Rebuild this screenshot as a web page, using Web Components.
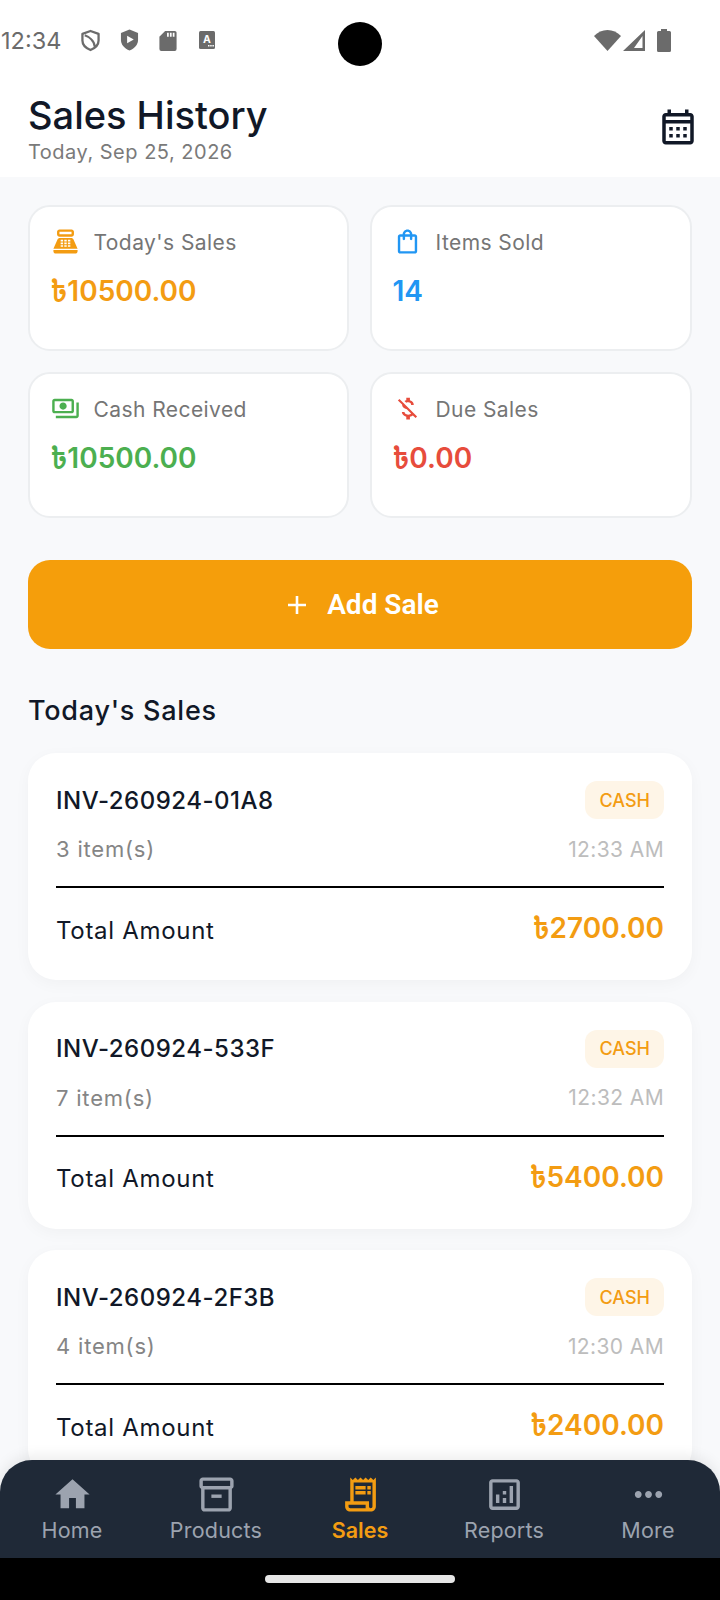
<!DOCTYPE html>
<html>
<head>
<meta charset="utf-8">
<style>
  html, body { margin: 0; padding: 0; }
  body { width: 720px; height: 1600px; overflow: hidden; background: #f8f9fb; font-family: Inter, "Noto Sans Bengali", "Noto Sans", sans-serif; }
  sales-screen { height: 1600px; }
</style>
</head>
<body>
<sales-screen>
  <status-bar slot="status"></status-bar>
  <page-header slot="header" title="Sales History" sub="Today, Sep 25, 2026"></page-header>
  <div slot="stats">
    <stat-grid>
      <stat-card label="Today's Sales" value="৳10500.00" color="#f39c12" icon="register"></stat-card>
      <stat-card label="Items Sold" value="14" color="#2196f3" icon="bag"></stat-card>
      <stat-card label="Cash Received" value="৳10500.00" color="#4caf50" icon="cash"></stat-card>
      <stat-card label="Due Sales" value="৳0.00" color="#e74c3c" icon="due"></stat-card>
    </stat-grid>
  </div>
  <add-button slot="action">Add Sale</add-button>
  <span slot="title">Today's Sales</span>
  <sale-card slot="list" inv="INV-260924-01A8" items="3 item(s)" time="12:33 AM" total="৳2700.00"></sale-card>
  <sale-card slot="list" inv="INV-260924-533F" items="7 item(s)" time="12:32 AM" total="৳5400.00"></sale-card>
  <sale-card slot="list" inv="INV-260924-2F3B" items="4 item(s)" time="12:30 AM" total="৳2400.00"></sale-card>
  <bottom-nav slot="nav"></bottom-nav>
</sales-screen>

<script>
// material icons, 24 grid
const ICONS = {
  register: '<path d="M17 2H7c-1.100 0-2 .9-2 2v2c0 1.100.9 2 2 2h10c1.100 0 2-.9 2-2V4c0-1.100-.9-2-2-2zm0 4H7V4h10v2zm3 16H4c-1.100 0-2-.9-2-2v-1h20v1c0 1.100-.9 2-2 2z"/><path fill-rule="evenodd" d="M18.530 10.190C18.210 9.470 17.570 9 16.830 9H7.170c-.74 0-1.380.47-1.700 1.190L2 18h20zM8 10.500h2V12H8zm3 0h2V12h-2zm3 0h2V12h-2zM8 12.800h2v1.400H8zm3 0h2v1.400h-2zm3 0h2v1.400h-2zM8 15h2v1.400H8zm3 0h2v1.400h-2zm3 0h2v1.400h-2z"/>',
  bag: '<path d="M18 6h-2c0-2.210-1.790-4-4-4S8 3.790 8 6H6c-1.100 0-2 .9-2 2v12c0 1.100.9 2 2 2h12c1.100 0 2-.9 2-2V8c0-1.100-.9-2-2-2zm-6-2c1.100 0 2 .9 2 2h-4c0-1.100.9-2 2-2zm6 16H6V8h2v2c0 .55.45 1 1 1s1-.45 1-1V8h4v2c0 .55.45 1 1 1s1-.45 1-1V8h2v12z"/>',
  cash: '<path d="M19 14V6c0-1.100-.9-2-2-2H3c-1.100 0-2 .9-2 2v8c0 1.100.9 2 2 2h14c1.100 0 2-.9 2-2zm-2 0H3V6h14v8zm-7-7c-1.660 0-3 1.340-3 3s1.340 3 3 3 3-1.340 3-3-1.340-3-3-3zm13 0v11c0 1.100-.9 2-2 2H4v-2h17V7h2z"/>',
  due: '<path d="M12.500 6.900c1.780 0 2.440.85 2.500 2.100h2.210c-.07-1.720-1.120-3.300-3.210-3.810V3h-3v2.160c-.53.12-1.030.3-1.480.54l1.470 1.470c.41-.17.91-.27 1.510-.27zM5.330 4.060L4.060 5.330 7.500 8.770c0 2.080 1.560 3.210 3.910 3.900l3.510 3.510c-.34.48-1.050.91-2.420.91-2.060 0-2.870-.92-2.980-2.100h-2.200c.12 2.190 1.760 3.420 3.680 3.830V21h3v-2.150c.96-.18 1.820-.55 2.450-1.120l2.220 2.220 1.270-1.270L5.330 4.060z"/>',
  calendar: '<path d="M19 4h-1V2h-2v2H8V2H6v2H5c-1.100 0-2 .9-2 2v14c0 1.100.9 2 2 2h14c1.100 0 2-.9 2-2V6c0-1.100-.9-2-2-2zm0 16H5V10h14v10zm0-12H5V6h14v2zM9 14H7v-2h2v2zm4 0h-2v-2h2v2zm4 0h-2v-2h2v2zm-8 4H7v-2h2v2zm4 0h-2v-2h2v2zm4 0h-2v-2h2v2z"/>',
  home: '<path d="M10 20v-6h4v6h5v-8h3L12 3 2 12h3v8z"/>',
  products: '<path d="M20 2H4c-1 0-2 .9-2 2v3.010c0 .72.43 1.340 1 1.690V20c0 1.100 1.100 2 2 2h14c.9 0 2-.9 2-2V8.700c.57-.35 1-.97 1-1.690V4c0-1.100-1-2-2-2zm-1 18H5V9h14v11zm1-13H4V4h16v3z"/><path d="M9 12h6v2H9z"/>',
  sales: '<path d="M19.500 3.500L18 2l-1.500 1.500L15 2l-1.500 1.500L12 2l-1.500 1.500L9 2 7.500 3.500 6 2v14H3v3c0 1.660 1.340 3 3 3h12c1.660 0 3-1.340 3-3V2l-1.500 1.500zM15 20H6c-.55 0-1-.45-1-1v-1h10v2zm4-1c0 .55-.45 1-1 1s-1-.45-1-1v-3H8V5h11v14z"/><path d="M9 7h6v2H9zm7 0h2v2h-2zm-7 3h6v2H9zm7 0h2v2h-2z"/>',
  reports: '<path d="M19 3H5c-1.100 0-2 .9-2 2v14c0 1.100.9 2 2 2h14c1.100 0 2-.9 2-2V5c0-1.100-.9-2-2-2zm0 16H5V5h14v14z"/><path d="M7 12h2v5H7zm8-5h2v10h-2zm-4 7h2v3h-2zm0-4h2v2h-2z"/>',
  more: '<path d="M6 10c-1.100 0-2 .9-2 2s.9 2 2 2 2-.9 2-2-.9-2-2-2zm12 0c-1.100 0-2 .9-2 2s.9 2 2 2 2-.9 2-2-.9-2-2-2zm-6 0c-1.100 0-2 .9-2 2s.9 2 2 2 2-.9 2-2-.9-2-2-2z"/>'
}

function icon (name, size) {
  return `<svg xmlns="http://www.w3.org/2000/svg" viewBox="0 0 24 24" width="${size}" height="${size}" fill="currentColor">${ICONS[name]}</svg>`
}

class SalesScreen extends HTMLElement {
  constructor () {
    super()
    this.shadow = this.attachShadow({ mode: 'open' })
  }

  connectedCallback () {
    this.shadow.innerHTML = /* html */`
      <style>
        :host { display: flex; flex-direction: column; position: relative; overflow: hidden; color: #111827; }
        .scroll { flex: 1; min-height: 0; overflow: hidden; }
        .stats { padding: 28px 28px 0; }
        .action { padding: 42px 28px 0; }
        .title { padding: 47px 28px 0; font-size: 27px; font-weight: 500; line-height: 30px; color: #111827; letter-spacing: .75px; }
        .list { padding: 27px 28px 0; display: flex; flex-direction: column; gap: 21.5px; }
        .nav { position: absolute; left: 0; right: 0; bottom: 0; }
      </style>
      <slot name="status"></slot>
      <slot name="header"></slot>
      <div class="scroll">
        <div class="stats"><slot name="stats"></slot></div>
        <div class="action"><slot name="action"></slot></div>
        <div class="title"><slot name="title"></slot></div>
        <div class="list"><slot name="list"></slot></div>
      </div>
      <div class="nav"><slot name="nav"></slot></div>
    `
  }
}

class StatusBar extends HTMLElement {
  constructor () {
    super()
    this.shadow = this.attachShadow({ mode: 'open' })
  }

  connectedCallback () {
    this.shadow.innerHTML = /* html */`
      <style>
        :host { display: flex; align-items: center; position: relative; height: 80px; background: #fff; color: #6b6b6b; box-sizing: border-box; }
        .time { font-size: 23.5px; font-family: Inter, sans-serif; margin-left: 1px; width: 80px; }
        .left { display: flex; align-items: center; gap: 20px; }
        .right { margin-left: auto; margin-right: 49px; display: flex; align-items: center; }
        .cam { position: absolute; left: 338px; top: 22px; width: 44px; height: 44px; border-radius: 50%; background: #000; }
        svg { display: block; }
      </style>
      <span class="time">12:34</span>
      <div class="left">
        <svg viewBox="0 0 20 24" width="19" height="23"><path fill="none" stroke="currentColor" stroke-width="2.400" stroke-linejoin="round" d="M10 2l8.500 3v7c0 4.500-3.500 8-8.500 10C5 20 1.500 16.500 1.500 12V5zM4 6.500C8 8 14 12 14.500 18.500"/></svg>
        <svg viewBox="0 0 20 24" width="19" height="24"><path fill="currentColor" d="M10 1l9 3.500V12c0 5-3.800 9-9 11C4.800 21 1 17 1 12V4.500z"/><path fill="#fff" d="M7.500 7.500v8l7-4z"/></svg>
        <svg viewBox="0 0 18 22" width="18" height="21"><path fill="currentColor" d="M6 1h10a2 2 0 0 1 2 2v17a2 2 0 0 1-2 2H2a2 2 0 0 1-2-2V7z"/><path fill="#fff" d="M8 3h1.800v4H8zM11 3h1.800v4H11zM14 3h1.800v4H14z"/></svg>
        <svg viewBox="0 0 16 18" width="16" height="18" style="margin-left:2px"><rect width="16" height="18" rx="1.500" fill="currentColor"/><text x="8" y="11.500" text-anchor="middle" font-family="Inter, sans-serif" font-size="10.500" font-weight="700" fill="#fff">A</text><path fill="#fff" d="M9 14h1.500v1.500H9zM11.200 14h1.500v1.500h-1.500zM13.400 14h1.500v1.500h-1.500z"/></svg>
      </div>
      <div class="cam"></div>
      <div class="right">
        <svg viewBox="0 0 27 21" width="27" height="21"><path fill="currentColor" d="M13.500 21L0 6C3.800 2.200 8.400 0 13.500 0S23.200 2.200 27 6z"/></svg>
        <svg viewBox="0 0 22 21" width="22" height="21" style="margin-left:2px"><path fill="currentColor" fill-rule="evenodd" d="M22 0v21H0zM19.500 6L11 18h8.500z"/></svg>
        <svg viewBox="0 0 14 23" width="14" height="23" style="margin-left:12px"><path fill="currentColor" d="M4 0h6v2h2.500A1.500 1.500 0 0 1 14 3.500V21.500a1.500 1.500 0 0 1-1.500 1.500h-11A1.500 1.500 0 0 1 0 21.500V3.500A1.500 1.500 0 0 1 1.500 2H4z"/></svg>
      </div>
    `
  }
}

class PageHeader extends HTMLElement {
  constructor () {
    super()
    this.shadow = this.attachShadow({ mode: 'open' })
  }

  connectedCallback () {
    this.shadow.innerHTML = /* html */`
      <style>
        :host { display: flex; justify-content: space-between; align-items: flex-start; height: 97px; box-sizing: border-box; padding: 14px 21px 0 28px; background: #fff; }
        h1 { margin: 0; font-size: 38px; font-weight: 550; line-height: 42px; color: #111827; }
        p { margin: 4px 0 0; font-size: 20px; line-height: 24px; color: #7a7a7a; letter-spacing: .5px; }
        svg { display: block; color: #111827; margin-top: 12px; }
      </style>
      <div>
        <h1>${this.getAttribute('title')}</h1>
        <p>${this.getAttribute('sub')}</p>
      </div>
      ${icon('calendar', 42)}
    `
  }
}

class StatGrid extends HTMLElement {
  constructor () {
    super()
    this.shadow = this.attachShadow({ mode: 'open' })
  }

  connectedCallback () {
    this.shadow.innerHTML = /* html */`
      <style>
        :host { display: grid; grid-template-columns: 321px 1fr; gap: 21px; }
      </style>
      <slot></slot>
    `
  }
}

class StatCard extends HTMLElement {
  constructor () {
    super()
    this.shadow = this.attachShadow({ mode: 'open' })
  }

  connectedCallback () {
    const color = this.getAttribute('color')
    this.shadow.innerHTML = /* html */`
      <style>
        :host { display: block; height: 146px; box-sizing: border-box; padding: 20px 20.5px; background: #fff; border: 2px solid #eceef0; border-radius: 22px; }
        .top { display: flex; align-items: center; gap: 14px; height: 29px; color: ${color}; }
        .label { font-size: 21px; color: #757575; letter-spacing: .43px; margin-top: 2px; }
        .value { margin-top: 18px; font-size: 28px; line-height: 34px; font-weight: 600; color: ${color}; }
        svg { display: block; flex: none; }
      </style>
      <div class="top">${icon(this.getAttribute('icon'), 29)}<span class="label">${this.getAttribute('label')}</span></div>
      <div class="value">${this.getAttribute('value')}</div>
    `
  }
}

class AddButton extends HTMLElement {
  constructor () {
    super()
    this.shadow = this.attachShadow({ mode: 'open' })
  }

  connectedCallback () {
    this.shadow.innerHTML = /* html */`
      <style>
        :host { display: flex; align-items: center; justify-content: center; gap: 20px; height: 89px; box-sizing: border-box; padding-left: 6px; border-radius: 22px; background: #f59e0b; color: #fff; font-family: Roboto, sans-serif; font-size: 28px; font-weight: 600; }
        svg { display: block; }
      </style>
      <svg viewBox="0 0 20 20" width="20" height="20"><path stroke="currentColor" stroke-width="2.600" d="M10 1v18M1 10h18"/></svg>
      <slot></slot>
    `
  }
}

class SaleCard extends HTMLElement {
  constructor () {
    super()
    this.shadow = this.attachShadow({ mode: 'open' })
  }

  connectedCallback () {
    this.shadow.innerHTML = /* html */`
      <style>
        :host { display: block; height: 227px; box-sizing: border-box; padding: 28px; background: #fff; border-radius: 28px; box-shadow: 0 4px 16px rgba(0,0,0,.035); }
        .row { display: flex; justify-content: space-between; align-items: center; }
        .inv { font-size: 24px; font-weight: 500; color: #111827; letter-spacing: .5px; }
        .badge { height: 38px; box-sizing: border-box; padding: 0 14px; display: flex; align-items: center; background: #fef5e7; border-radius: 12px; color: #f39c12; font-size: 18px; font-weight: 500; }
        .sub { margin-top: 17px; height: 26px; }
        .items { font-size: 22px; color: #858585; letter-spacing: .8px; }
        .time { font-size: 21px; color: #bdbdbd; letter-spacing: .39px; }
        hr { margin: 24px 0 0; border: 0; height: 2px; background: #000; }
        .foot { margin-top: 24px; height: 36px; }
        .label { font-size: 24px; color: #111827; letter-spacing: .7px; }
        .total { font-size: 28px; font-weight: 600; color: #f39c12; }
      </style>
      <div class="row">
        <span class="inv">${this.getAttribute('inv')}</span>
        <span class="badge">CASH</span>
      </div>
      <div class="row sub">
        <span class="items">${this.getAttribute('items')}</span>
        <span class="time">${this.getAttribute('time')}</span>
      </div>
      <hr>
      <div class="row foot">
        <span class="label">Total Amount</span>
        <span class="total">${this.getAttribute('total')}</span>
      </div>
    `
  }
}

class BottomNav extends HTMLElement {
  constructor () {
    super()
    this.shadow = this.attachShadow({ mode: 'open' })
  }

  connectedCallback () {
    const tabs = [['home', 'Home'], ['products', 'Products'], ['sales', 'Sales'], ['reports', 'Reports'], ['more', 'More']]
    this.shadow.innerHTML = /* html */`
      <style>
        :host { display: block; }
        .bar { display: grid; grid-template-columns: repeat(5, 1fr); height: 98px; background: #1f2937; border-radius: 32px 32px 0 0; box-shadow: 0 -4px 14px rgba(0,0,0,.08); }
        .tab { display: flex; flex-direction: column; align-items: center; padding-top: 14px; color: #9ca3af; font-size: 21.5px; line-height: 30px; letter-spacing: .2px; }
        .tab.on { color: #f39c12; font-weight: 600; letter-spacing: 0; }
        .tab svg { display: block; }
        .sys { height: 42px; background: #000; display: flex; justify-content: center; padding-top: 17px; box-sizing: border-box; }
        .pill { width: 190px; height: 8px; border-radius: 4px; background: #e6e6e6; }
      </style>
      <div class="bar">
        ${tabs.map(t => `<div class="tab${t[0] === 'sales' ? ' on' : ''}">${icon(t[0], 41)}<span>${t[1]}</span></div>`).join('')}
      </div>
      <div class="sys"><div class="pill"></div></div>
    `
  }
}

customElements.define('sales-screen', SalesScreen)
customElements.define('status-bar', StatusBar)
customElements.define('page-header', PageHeader)
customElements.define('stat-grid', StatGrid)
customElements.define('stat-card', StatCard)
customElements.define('add-button', AddButton)
customElements.define('sale-card', SaleCard)
customElements.define('bottom-nav', BottomNav)
</script>
</body>
</html>
